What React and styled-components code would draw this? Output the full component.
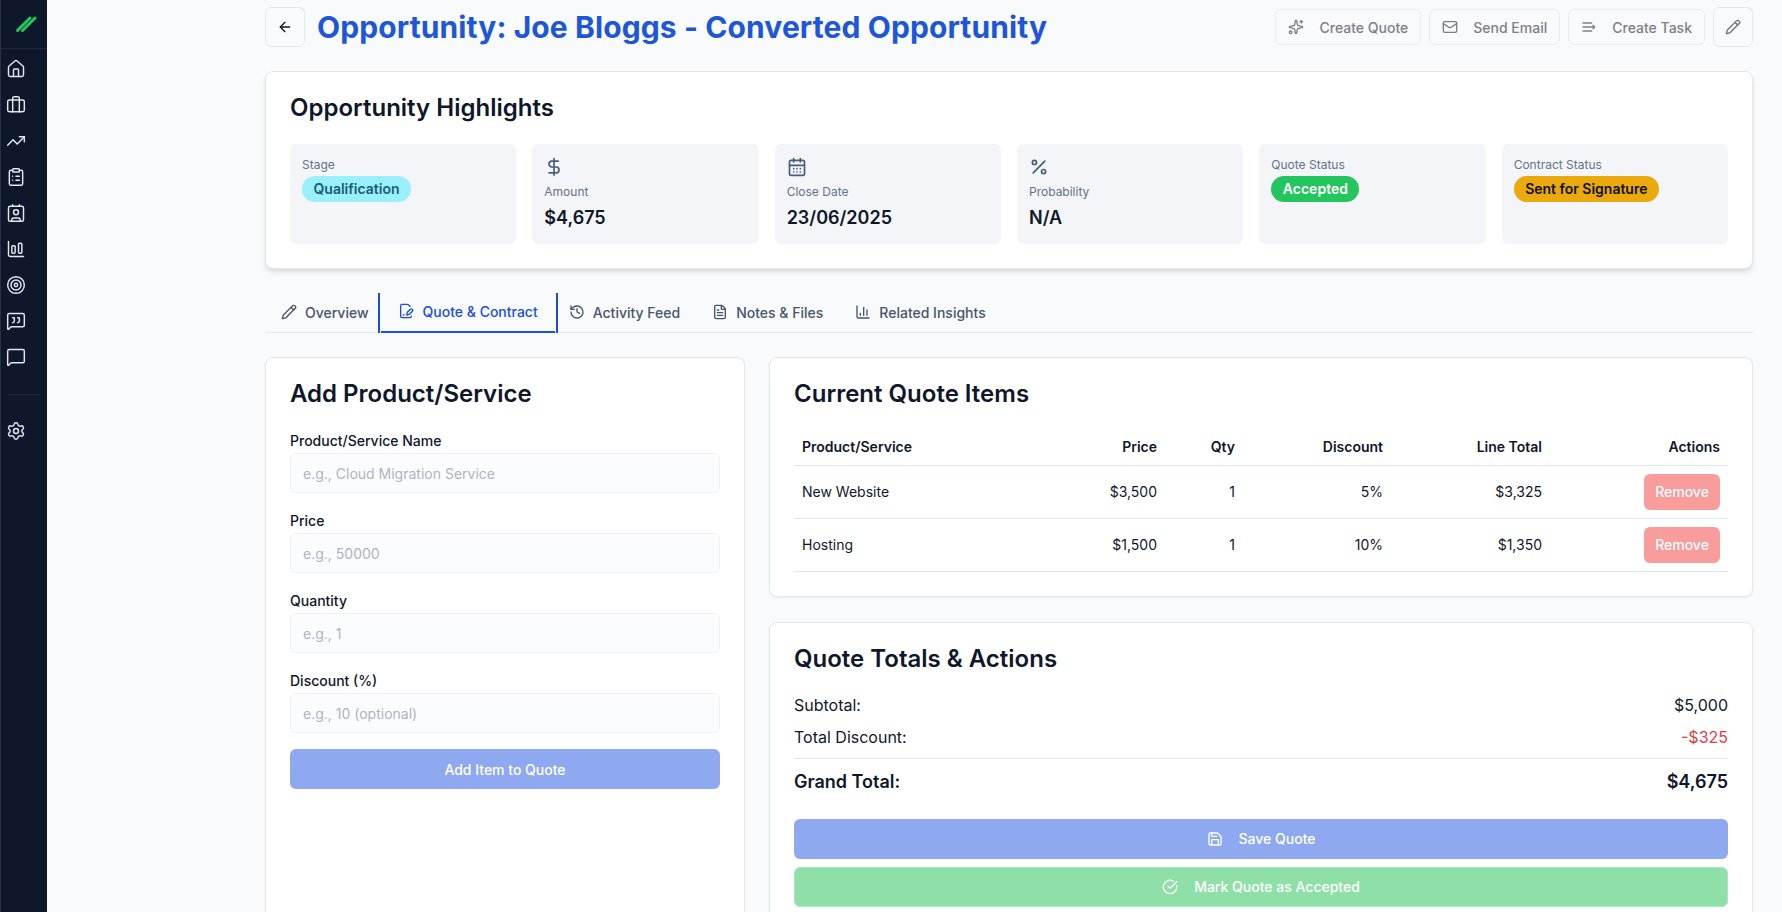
import styled, { createGlobalStyle } from 'styled-components';
import {
  ArrowLeft, Briefcase, CalendarDays, ChartColumn, ChartColumnBig, CircleCheckBig,
  ClipboardList, Contact, DollarSign, FilePenLine, FileText, History, House, Mail,
  MessageSquare, MessageSquareQuote, Pencil, Percent, Save, Settings, Sparkles, Target, TrendingUp,
} from 'lucide-react';

const GlobalStyle = createGlobalStyle`
  html, body {
    margin: 0;
    height: 100%;
    overflow: hidden;
    background: #f8fafc;
    font-family: Inter, "Liberation Sans", sans-serif;
    color: #0f172a;
  }
  * { box-sizing: border-box; }
`;

const Shell = styled.div`
  display: flex;
  height: 912px;
  overflow: hidden;
`;

const Sidebar = styled.aside`
  width: 47px;
  flex-shrink: 0;
  background: #0f172a;
  border-left: 1px solid #273244;
  display: flex;
  flex-direction: column;
`;

const LogoBox = styled.div`
  height: 49px;
  display: flex;
  align-items: center;
  justify-content: center;
  padding-left: 4px;
  border-bottom: 1px solid #1e293b;
`;

const SideNav = styled.nav`
  display: flex;
  flex-direction: column;
  gap: 16px;
  padding: 10px 0 0 5px;
  color: #e2e8f0;
  svg { display: block; }
`;

const SideRule = styled.div`
  height: 1px;
  background: #1e293b;
  margin: 11px 7px 10px 2px;
`;

const Main = styled.main`
  flex: 1;
  min-width: 0;
  padding: 7px 29px 0 218px;
`;

const Header = styled.header`
  display: flex;
  align-items: center;
  justify-content: space-between;
  margin-bottom: 24px;
`;

const HeaderLeft = styled.div`
  display: flex;
  align-items: center;
  gap: 12px;
`;

const IconButton = styled.button`
  width: 40px;
  height: 40px;
  display: flex;
  align-items: center;
  justify-content: center;
  background: #f8fafc;
  border: 1px solid #e2e8f0;
  border-radius: 6px;
  color: ${(p) => (p.$muted ? '#71717a' : '#0f172a')};
  padding: 0;
`;

const Title = styled.h1`
  margin: 0;
  font-size: 30px;
  line-height: 36px;
  font-weight: 700;
  letter-spacing: 0.1px;
  color: #1d56d8;
`;

const HeaderActions = styled.div`
  display: flex;
  align-items: center;
  gap: 8px;
`;

const ActionButton = styled.button`
  height: 36px;
  display: flex;
  align-items: center;
  gap: 15px;
  padding: 0 12px;
  background: #f8fafc;
  border: 1px solid #e8ecf1;
  border-radius: 6px;
  color: #7f7f88;
  font: 500 14px Inter, sans-serif;
`;

const Card = styled.section`
  background: #fff;
  border: 1px solid #e2e8f0;
  border-radius: 8px;
  padding: 24px;
  box-shadow: ${(p) => (p.$raised ? '0 4px 6px -1px rgba(0,0,0,.1), 0 2px 4px -2px rgba(0,0,0,.1)' : '0 1px 2px rgba(0,0,0,.05)')};
`;

const CardTitle = styled.h2`
  margin: 0 0 ${(p) => p.$gap || 16}px;
  font-size: 24px;
  line-height: 24px;
  font-weight: 600;
  color: #0f172a;
`;

const StatGrid = styled.div`
  display: grid;
  grid-template-columns: repeat(6, 1fr);
  gap: 16px;
`;

const Stat = styled.div`
  height: 100px;
  padding: 13px 12px 12px;
  background: #f3f5f8;
  border-radius: 6px;
`;

const StatIcon = styled.div`
  color: #475b80;
  height: 24px;
  margin-bottom: 3px;
  svg { display: block; }
`;

const StatLabel = styled.div`
  font-size: 12px;
  line-height: 16px;
  color: #64748b;
`;

const StatValue = styled.div`
  margin-top: 4px;
  font-size: 18px;
  line-height: 28px;
  font-weight: 600;
  color: #0f172a;
`;

const Pill = styled.span`
  display: inline-block;
  margin-top: 3px;
  height: 26px;
  padding: 0 11.5px;
  border-radius: 13px;
  font-size: 14px;
  line-height: 26px;
  font-weight: 600;
  background: ${(p) => p.$bg};
  color: ${(p) => p.$fg};
`;

const Tabs = styled.div`
  display: flex;
  height: 40px;
  margin-top: 24px;
  border-bottom: 1px solid #e2e8f0;
`;

const Tab = styled.div`
  display: flex;
  align-items: stretch;
  height: 40px;
  color: ${(p) => (p.$active ? '#1d4ed8' : '#475569')};
  font-size: 14px;
  font-weight: 500;
  ${(p) => p.$active && `
    margin: 0 -5px 0 -7px;
    border-left: 2px solid #1d4ed8;
    border-right: 2px solid #1d4ed8;
  `}
`;

const TabInner = styled.div`
  display: flex;
  align-items: center;
  gap: ${(p) => (p.$active ? 9 : 8)}px;
  margin: ${(p) => (p.$active ? '0 1px' : '0')};
  padding: ${(p) => (p.$active ? '0 17px 2px' : '0 16px')};
  border-bottom: 2px solid ${(p) => (p.$active ? '#1d4ed8' : 'transparent')};
`;

const Columns = styled.div`
  display: grid;
  grid-template-columns: 480px 1fr;
  gap: 24px;
  margin-top: 24px;
  align-items: start;
`;

const FormCard = styled(Card)`
  min-height: 600px;
`;

const Stack = styled.div`
  display: flex;
  flex-direction: column;
  gap: 25px;
`;

const Field = styled.div`
  margin-bottom: 18px;
  &:last-of-type { margin-bottom: 16px; }
`;

const FieldLabel = styled.label`
  display: block;
  font-size: 14px;
  line-height: 20px;
  font-weight: 500;
  margin-bottom: 2px;
`;

const Input = styled.input`
  display: block;
  width: 100%;
  height: 40px;
  padding: 0 12px;
  background: #fbfcfe;
  border: 1px solid #eef1f5;
  border-radius: 6px;
  font: 14px Inter, sans-serif;
  &::placeholder { color: #adb5c4; opacity: 1; }
`;

const WideButton = styled.button`
  width: 100%;
  height: 40px;
  display: flex;
  align-items: center;
  justify-content: center;
  gap: ${(p) => p.$gap || 8}px;
  border: ${(p) => (p.$green ? '1px solid #a9e7bd' : '0')};
  border-radius: 6px;
  background: ${(p) => (p.$green ? '#8fdfa8' : '#8fa9f0')};
  color: #fff;
  font: 500 14px Inter, sans-serif;
`;

const Table = styled.table`
  width: 100%;
  table-layout: fixed;
  border-collapse: collapse;
  font-size: 14px;
`;

const Th = styled.th`
  width: ${(p) => (p.$w ? `${p.$w}px` : 'auto')};
  height: 36px;
  padding: 0 8px;
  font-weight: 600;
  text-align: ${(p) => (p.$left ? 'left' : 'right')};
  border-bottom: 1px solid #e2e8f0;
`;

const Td = styled.td`
  height: 53px;
  padding: 0 8px;
  text-align: ${(p) => (p.$left ? 'left' : 'right')};
  border-bottom: 1px solid #e2e8f0;
`;

const RemoveButton = styled.button`
  width: 76px;
  height: 36px;
  border: 0;
  border-radius: 6px;
  background: #f89c9c;
  color: #fff;
  font: 500 14px Inter, sans-serif;
  vertical-align: middle;
`;

const TotalRow = styled.div`
  display: flex;
  justify-content: space-between;
  align-items: center;
  height: 24px;
  margin-bottom: 8px;
  font-size: 16px;
`;

const TotalValue = styled.span`
  color: ${(p) => (p.$danger ? '#e03e3e' : 'inherit')};
`;

const GrandRow = styled.div`
  display: flex;
  justify-content: space-between;
  align-items: center;
  height: 45px;
  margin-top: 9px;
  margin-bottom: 16px;
  border-top: 1px solid #e2e8f0;
  padding-top: 1px;
  font-size: 18px;
  font-weight: 600;
`;

const ButtonStack = styled.div`
  display: flex;
  flex-direction: column;
  gap: 8px;
`;

const Logo = () => (
  <svg width="22" height="18" viewBox="0 0 22 18" fill="none" stroke="#22c55e" strokeWidth="3" strokeLinecap="round">
    <path d="M2.5 15.5 L15 3" />
    <path d="M7.5 15.5 L20 3" />
  </svg>
);

const TaskIcon = () => (
  <svg width="16" height="16" viewBox="0 0 24 24" fill="none" stroke="currentColor" strokeWidth="2" strokeLinecap="round" strokeLinejoin="round">
    <path d="M3 6h13" />
    <path d="M3 12h17" />
    <path d="M3 18h13" />
    <path d="m18 9.5 2.5 2.5-2.5 2.5" />
  </svg>
);

const sideIcons = [House, Briefcase, TrendingUp, ClipboardList, Contact, ChartColumnBig, Target, MessageSquareQuote, MessageSquare];

const stats = [
  { label: 'Stage', pill: { text: 'Qualification', bg: '#99f0fb', fg: '#155e75' } },
  { label: 'Amount', icon: DollarSign, value: '$4,675' },
  { label: 'Close Date', icon: CalendarDays, value: '23/06/2025' },
  { label: 'Probability', icon: Percent, value: 'N/A' },
  { label: 'Quote Status', pill: { text: 'Accepted', bg: '#22c55e', fg: '#fff' } },
  { label: 'Contract Status', pill: { text: 'Sent for Signature', bg: '#eaa90c', fg: '#0f0f0f' } },
];

const tabs = [
  { label: 'Overview', icon: Pencil },
  { label: 'Quote & Contract', icon: FilePenLine, active: true },
  { label: 'Activity Feed', icon: History },
  { label: 'Notes & Files', icon: FileText },
  { label: 'Related Insights', icon: ChartColumn },
];

const fields = [
  { label: 'Product/Service Name', hint: 'e.g., Cloud Migration Service' },
  { label: 'Price', hint: 'e.g., 50000' },
  { label: 'Quantity', hint: 'e.g., 1' },
  { label: 'Discount (%)', hint: 'e.g., 10 (optional)' },
];

const items = [
  ['New Website', '$3,500', '1', '5%', '$3,325'],
  ['Hosting', '$1,500', '1', '10%', '$1,350'],
];

export default function App() {
  return (
    <Shell>
      <GlobalStyle />
      <Sidebar>
        <LogoBox><Logo /></LogoBox>
        <SideNav>
          {sideIcons.map((Icon, i) => <Icon key={i} size={20} strokeWidth={1.75} />)}
          <SideRule />
          <Settings size={20} strokeWidth={1.75} />
        </SideNav>
      </Sidebar>
      <Main>
        <Header>
          <HeaderLeft>
            <IconButton><ArrowLeft size={16} /></IconButton>
            <Title>Opportunity: Joe Bloggs - Converted Opportunity</Title>
          </HeaderLeft>
          <HeaderActions>
            <ActionButton><Sparkles size={16} />Create Quote</ActionButton>
            <ActionButton><Mail size={16} />Send Email</ActionButton>
            <ActionButton><TaskIcon />Create Task</ActionButton>
            <IconButton $muted><Pencil size={16} /></IconButton>
          </HeaderActions>
        </Header>

        <Card $raised>
          <CardTitle $gap={24}>Opportunity Highlights</CardTitle>
          <StatGrid>
            {stats.map((s) => (
              <Stat key={s.label}>
                {s.icon && <StatIcon><s.icon size={20} /></StatIcon>}
                <StatLabel>{s.label}</StatLabel>
                {s.value && <StatValue>{s.value}</StatValue>}
                {s.pill && <Pill $bg={s.pill.bg} $fg={s.pill.fg}>{s.pill.text}</Pill>}
              </Stat>
            ))}
          </StatGrid>
        </Card>

        <Tabs>
          {tabs.map((t) => (
            <Tab key={t.label} $active={t.active}>
              <TabInner $active={t.active}><t.icon size={16} />{t.label}</TabInner>
            </Tab>
          ))}
        </Tabs>

        <Columns>
          <FormCard>
            <CardTitle $gap={25}>Add Product/Service</CardTitle>
            {fields.map((f) => (
              <Field key={f.label}>
                <FieldLabel>{f.label}</FieldLabel>
                <Input placeholder={f.hint} disabled />
              </Field>
            ))}
            <WideButton disabled>Add Item to Quote</WideButton>
          </FormCard>

          <Stack>
            <Card>
              <CardTitle $gap={23}>Current Quote Items</CardTitle>
              <Table>
                <thead>
                  <tr>
                    <Th $left $w={291}>Product/Service</Th>
                    <Th $w={80}>Price</Th>
                    <Th $w={78}>Qty</Th>
                    <Th $w={148}>Discount</Th>
                    <Th $w={159}>Line Total</Th>
                    <Th>Actions</Th>
                  </tr>
                </thead>
                <tbody>
                  {items.map((row) => (
                    <tr key={row[0]}>
                      {row.map((cell, i) => <Td key={i} $left={i === 0}>{cell}</Td>)}
                      <Td><RemoveButton disabled>Remove</RemoveButton></Td>
                    </tr>
                  ))}
                </tbody>
              </Table>
            </Card>

            <Card>
              <CardTitle $gap={22}>Quote Totals &amp; Actions</CardTitle>
              <TotalRow><span>Subtotal:</span><span>$5,000</span></TotalRow>
              <TotalRow><span>Total Discount:</span><TotalValue $danger>-$325</TotalValue></TotalRow>
              <GrandRow><span>Grand Total:</span><span>$4,675</span></GrandRow>
              <ButtonStack>
                <WideButton disabled $gap={16}><Save size={16} />Save Quote</WideButton>
                <WideButton disabled $green $gap={16}><CircleCheckBig size={16} />Mark Quote as Accepted</WideButton>
              </ButtonStack>
            </Card>
          </Stack>
        </Columns>
      </Main>
    </Shell>
  );
}
